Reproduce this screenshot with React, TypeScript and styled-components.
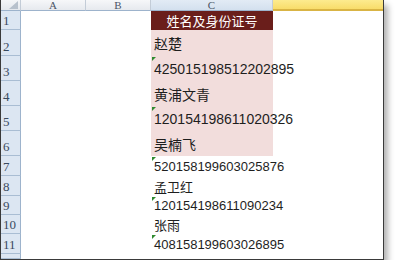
import styled, { createGlobalStyle, css } from "styled-components";

const GlobalStyle = createGlobalStyle`
  html, body {
    margin: 0;
    padding: 0;
    background: #ffffff;
  }
`;

const columns = [
  { key: "A", state: "normal" },
  { key: "B", state: "normal" },
  { key: "C", state: "blue" },
  { key: "D", label: "", state: "yellow" },
] as const;

type Row = {
  num: number | "";
  height: number;
  text?: string;
  kind?: "head" | "pink" | "plain";
  size?: number;
  flag?: boolean;
};

const rows: Row[] = [
  { num: 1, height: 19, text: "姓名及身份证号", kind: "head", size: 13 },
  { num: 2, height: 26, text: "赵楚", kind: "pink", size: 14 },
  { num: 3, height: 25, text: "425015198512202895", kind: "pink", size: 14, flag: true },
  { num: 4, height: 25, text: "黄浦文青", kind: "pink", size: 14 },
  { num: 5, height: 25, text: "120154198611020326", kind: "pink", size: 14, flag: true },
  { num: 6, height: 25, text: "吴楠飞", kind: "pink", size: 14 },
  { num: 7, height: 20, text: "520158199603025876", kind: "plain", size: 13, flag: true },
  { num: 8, height: 20, text: "孟卫红", kind: "plain", size: 13 },
  { num: 9, height: 19, text: "120154198611090234", kind: "plain", size: 13, flag: true },
  { num: 10, height: 19, text: "张雨", kind: "plain", size: 13 },
  { num: 11, height: 20, text: "408158199603026895", kind: "plain", size: 13, flag: true },
  { num: "", height: 5 },
];

export default function App() {
  return (
    <>
      <GlobalStyle />
      <Window>
        <Sheet $rows={rows.map((r) => r.height)}>
          <Corner>
            <svg width="9" height="8" viewBox="0 0 9 8">
              <polygon points="9,0 9,8 0,8" fill="#b7c1cc" />
            </svg>
          </Corner>
          {columns.map((c) => (
            <ColHead key={c.key} $state={c.state}>
              {"label" in c ? c.label : c.key}
            </ColHead>
          ))}
          {rows.map((r, i) => (
            <RowGroup key={i} r={r} />
          ))}
        </Sheet>
      </Window>
    </>
  );
}

const RowGroup = ({ r }: { r: Row }) => (
  <>
    <RowHead>{r.num}</RowHead>
    <Cell />
    <Cell />
    <DataCell $kind={r.kind} $size={r.size} $flag={r.flag}>
      {r.text}
    </DataCell>
    <Cell />
  </>
);

const Window = styled.div`
  width: 384px;
  height: 260px;
  box-sizing: border-box;
  border-left: 1px solid #3a3a3a;
  border-right: 1px solid #3a3a3a;
  border-bottom: 1px solid #3a3a3a;
  background: #ffffff;
  box-shadow: 4px 5px 6px rgba(0, 0, 0, 0.3);
  overflow: hidden;
`;

const Sheet = styled.div<{ $rows: number[] }>`
  display: grid;
  grid-template-columns: 20px 65px 65px 122px 110px;
  grid-template-rows: 11px ${({ $rows }) => $rows.map((h) => `${h}px`).join(" ")};
`;

const Corner = styled.div`
  box-sizing: border-box;
  background: linear-gradient(#f4f6f8, #e4e8ed);
  border-right: 1px solid #c3ccd7;
  border-bottom: 1px solid #9db3cc;
  display: flex;
  align-items: flex-start;
  justify-content: flex-end;
  padding: 1px 2px 0 0;
`;

const ColHead = styled.div<{ $state: "normal" | "blue" | "yellow" }>`
  box-sizing: border-box;
  font-family: "Liberation Serif", serif;
  font-size: 11px;
  line-height: 10px;
  color: #4a5566;
  text-align: center;
  border-right: 1px solid #c3ccd7;
  border-bottom: 1px solid #9db3cc;
  background: linear-gradient(#f6f7f9, #e6e9ee);
  ${({ $state }) =>
    $state === "blue" &&
    css`
      background: linear-gradient(#e2ebf5, #d3e0ee);
    `}
  ${({ $state }) =>
    $state === "yellow" &&
    css`
      background: linear-gradient(#fdeb8f, #f8dc6a);
      border-bottom: 2px solid #d9b444;
      border-right: none;
    `}
`;

const RowHead = styled.div`
  box-sizing: border-box;
  background: #dce6f2;
  border-right: 1px solid #9db3cc;
  border-bottom: 1px solid #a9bdd3;
  font-family: "Liberation Serif", serif;
  font-size: 13px;
  line-height: 13px;
  color: #3a4a5e;
  display: flex;
  align-items: flex-end;
  padding: 0 0 2px 2px;
  overflow: visible;
  white-space: nowrap;
`;

const Cell = styled.div``;

const DataCell = styled.div<{ $kind?: Row["kind"]; $size?: number; $flag?: boolean }>`
  position: relative;
  z-index: 1;
  display: flex;
  align-items: center;
  padding-left: 3px;
  white-space: nowrap;
  font-family: "Liberation Sans", "Noto Sans CJK SC", sans-serif;
  font-size: ${({ $size }) => $size ?? 13}px;
  color: #1e1e1e;
  ${({ $kind }) =>
    $kind === "pink" &&
    css`
      background: #f2dddc;
    `}
  ${({ $kind }) =>
    $kind === "head" &&
    css`
      background: #6a1e1b;
      color: #ffffff;
      justify-content: center;
      padding-left: 0;
    `}
  ${({ $flag }) =>
    $flag &&
    css`
      &::before {
        content: "";
        position: absolute;
        top: 1px;
        left: 1px;
        border-top: 4px solid #2f8a2f;
        border-right: 4px solid transparent;
      }
    `}
`;
